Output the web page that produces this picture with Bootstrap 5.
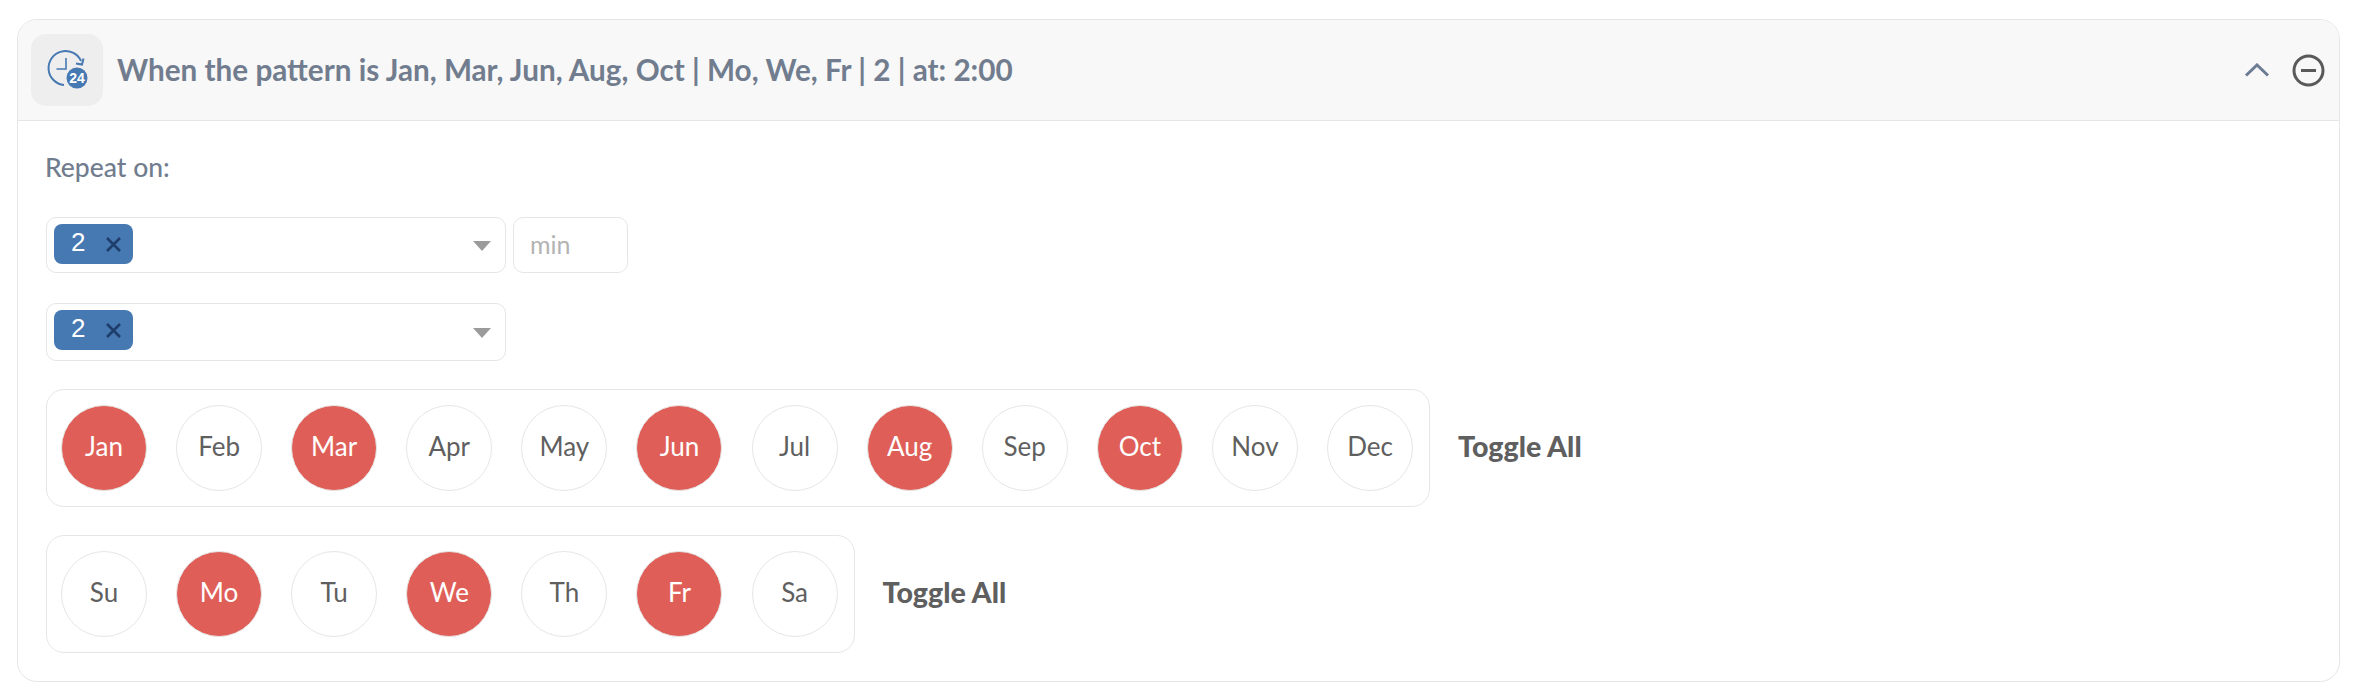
<!DOCTYPE html>
<html lang="en">
<head>
<meta charset="utf-8">
<title>Schedule</title>
<link rel="stylesheet" href="https://cdn.jsdelivr.net/npm/bootstrap@5.3.0/dist/css/bootstrap.min.css">
<style>
body { background:#fff; font-family:"Lato","Liberation Sans",sans-serif; color:#5f5f5f; padding:19px 16px 15px 17px; }
.sched-card { border:1px solid #e6e6e6; border-radius:20px; --bs-card-inner-border-radius:19px; overflow:hidden; }
.sched-head { height:101px; background:#f8f8f8; border-bottom:1px solid #e6e6e6; padding:0 14px 0 13px; gap:14px; }
.icon-tile { width:72px; height:72px; background:#eeeeee; border-radius:15px; flex:none; }
.sched-title { font-size:29.7px; font-weight:700; color:#717d8e; line-height:1; }
.sched-body { padding:21px 28px 28px; }
.repeat-label { font-size:26.5px; font-weight:500; color:#717d8e; height:50px; margin-bottom:25px; margin-left:-1px; line-height:50px; }
.pick-row { margin-bottom:30px; gap:7px; }
.pick-row.last-pick { margin-bottom:28px; }
.pick-box { width:460px; height:56px; border:1px solid #e6e6e6; border-radius:10px; padding:6px 14px 0 7px; background:#fff; }
.pick-box.tall { height:58px; }
.pick-tag { width:79px; height:40px; background:#4678b2; border-radius:8px; padding:0 12px 0 17px; }
.tag-num { color:#fff; font-size:26px; font-family:"Liberation Sans",sans-serif; line-height:1; margin-bottom:4px; }
.tag-x { width:15px; height:15px; }
.caret-down { width:0; height:0; border-left:9px solid transparent; border-right:9px solid transparent; border-top:10px solid #9b9b9b; margin-top:17px; }
.pick-box.tall .caret-down { margin-top:18px; }
.unit-box { width:115px; height:56px; border:1px solid #e6e6e6; border-radius:10px; font-size:25px; color:#b3b3b3; padding-left:16px; line-height:52px; }
.circle-row { margin-bottom:28px; gap:28px; }
.circle-box { height:118px; border:1px solid #e6e6e6; border-radius:18px; padding:0 16px 0 14px; gap:29.1px; }
.circ { width:86px; height:86px; border-radius:50%; border:1px solid #e6e6e6; font-size:26px; color:#5f5f5f; flex:none; padding-bottom:4px; }
.circ.on { background:#df5f58; color:#fff; }
.toggle-all { font-size:28.6px; font-weight:900; color:#5f5f5f; margin-bottom:4px; }
</style>
</head>
<body>
<div class="card sched-card">
  <div class="d-flex align-items-center sched-head">
    <div class="icon-tile d-flex align-items-center justify-content-center">
      <svg width="44" height="44" viewBox="44 48 44 44" aria-hidden="true">
        <path d="M63 85 A17 17 0 1 1 80 61" fill="none" stroke="#4678b2" stroke-width="2"/>
        <path d="M75 63.5 L81 64.5 L82.5 58.5" fill="none" stroke="#4678b2" stroke-width="2"/>
        <path d="M65 58 V69 H55.5" fill="none" stroke="#4678b2" stroke-width="1.6"/>
        <circle cx="76" cy="78" r="10.5" fill="#4678b2"/>
        <text x="76" y="83" text-anchor="middle" font-size="14" font-weight="700" font-family="Liberation Sans, sans-serif" fill="#fff">24</text>
      </svg>
    </div>
    <div class="sched-title flex-grow-1">When the pattern is Jan, Mar, Jun, Aug, Oct | Mo, We, Fr | 2 | at: 2:00</div>
    <svg class="me-2" width="26" height="14" viewBox="0 0 26 14" aria-hidden="true"><path d="M2 12.5 L13 2 L24 12.5" fill="none" stroke="#6b7c93" stroke-width="3"/></svg>
    <svg width="33" height="33" viewBox="0 0 33 33" aria-hidden="true"><circle cx="16.5" cy="16.5" r="14.5" fill="none" stroke="#595959" stroke-width="3"/><path d="M9 16.5 H24" stroke="#595959" stroke-width="3"/></svg>
  </div>
  <div class="sched-body">
    <div class="repeat-label">Repeat on:</div>
    <div class="d-flex pick-row">
      <div class="pick-box d-flex justify-content-between align-items-start">
        <div class="pick-tag d-flex justify-content-between align-items-center"><span class="tag-num">2</span><svg class="tag-x" viewBox="0 0 15 15" aria-hidden="true"><path d="M1 1 L14 14 M14 1 L1 14" stroke="#1f3d6b" stroke-width="2.6"/></svg></div>
        <div class="caret-down"></div>
      </div>
      <div class="unit-box">min</div>
    </div>
    <div class="d-flex pick-row last-pick">
      <div class="pick-box tall d-flex justify-content-between align-items-start">
        <div class="pick-tag d-flex justify-content-between align-items-center"><span class="tag-num">2</span><svg class="tag-x" viewBox="0 0 15 15" aria-hidden="true"><path d="M1 1 L14 14 M14 1 L1 14" stroke="#1f3d6b" stroke-width="2.6"/></svg></div>
        <div class="caret-down"></div>
      </div>
    </div>
    <div class="d-flex align-items-center circle-row">
      <div class="circle-box d-flex align-items-center">
        <div class="circ on d-flex align-items-center justify-content-center">Jan</div>
        <div class="circ d-flex align-items-center justify-content-center">Feb</div>
        <div class="circ on d-flex align-items-center justify-content-center">Mar</div>
        <div class="circ d-flex align-items-center justify-content-center">Apr</div>
        <div class="circ d-flex align-items-center justify-content-center">May</div>
        <div class="circ on d-flex align-items-center justify-content-center">Jun</div>
        <div class="circ d-flex align-items-center justify-content-center">Jul</div>
        <div class="circ on d-flex align-items-center justify-content-center">Aug</div>
        <div class="circ d-flex align-items-center justify-content-center">Sep</div>
        <div class="circ on d-flex align-items-center justify-content-center">Oct</div>
        <div class="circ d-flex align-items-center justify-content-center">Nov</div>
        <div class="circ d-flex align-items-center justify-content-center">Dec</div>
      </div>
      <div class="toggle-all">Toggle All</div>
    </div>
    <div class="d-flex align-items-center circle-row mb-0">
      <div class="circle-box d-flex align-items-center">
        <div class="circ d-flex align-items-center justify-content-center">Su</div>
        <div class="circ on d-flex align-items-center justify-content-center">Mo</div>
        <div class="circ d-flex align-items-center justify-content-center">Tu</div>
        <div class="circ on d-flex align-items-center justify-content-center">We</div>
        <div class="circ d-flex align-items-center justify-content-center">Th</div>
        <div class="circ on d-flex align-items-center justify-content-center">Fr</div>
        <div class="circ d-flex align-items-center justify-content-center">Sa</div>
      </div>
      <div class="toggle-all">Toggle All</div>
    </div>
  </div>
</div>
<script src="https://cdn.jsdelivr.net/npm/bootstrap@5.3.0/dist/js/bootstrap.bundle.min.js"></script>
</body>
</html>
